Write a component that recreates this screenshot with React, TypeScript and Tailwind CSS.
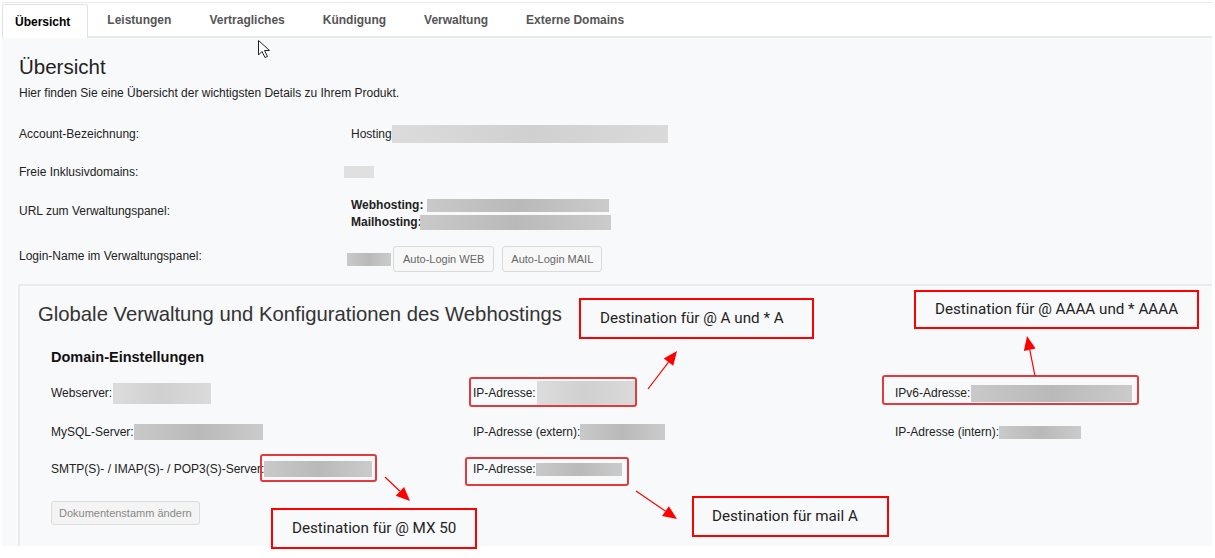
import React from "react";

type Pt = [number, number];

function Arrow({ from, to }: { from: Pt; to: Pt }) {
  const dx = to[0] - from[0];
  const dy = to[1] - from[1];
  const len = Math.hypot(dx, dy);
  const ux = dx / len;
  const uy = dy / len;
  const hl = 14;
  const hw = 6;
  const bx = to[0] - ux * hl;
  const by = to[1] - uy * hl;
  const px = -uy;
  const py = ux;
  const pts = `${to[0]},${to[1]} ${bx + px * hw},${by + py * hw} ${bx - px * hw},${by - py * hw}`;
  return (
    <g>
      <line x1={from[0]} y1={from[1]} x2={bx} y2={by} stroke="#f00" strokeWidth={1.2} />
      <polygon points={pts} fill="#f00" />
    </g>
  );
}

function Blur({ w, h, tone = "mid", className = "" }: { w: string; h: string; tone?: "mid" | "light"; className?: string }) {
  const t =
    tone === "light"
      ? "bg-gradient-to-r from-[#dcdcdc] via-[#d0d0d0] to-[#dadada]"
      : "bg-gradient-to-r from-[#c9c9c9] via-[#b9b9b9] to-[#cbcbcb]";
  return <span className={`inline-block ${w} ${h} ${t} ${className}`} />;
}

const tabs = ["Leistungen", "Vertragliches", "Kündigung", "Verwaltung", "Externe Domains"];

export default function App() {
  return (
    <div className="relative w-[1215px] h-[558px] bg-white overflow-hidden font-['Liberation_Sans',Arial,sans-serif] text-[#222]">
      <div className="ml-[2px] w-[1210px] pt-[2px]">
        <div className="border-t border-[#e9e9e9]">
          {/* Tab bar */}
          <div className="flex h-[35px] border-b-2 border-[#e7e9ec] text-[12px] font-bold">
            <div className="relative z-10 mt-[1px] mb-[-2px] flex items-center rounded-t-[3px] border border-b-0 border-[#dfe2e6] bg-white pl-[12px] pr-[17px] pt-[1px] text-black">
              Übersicht
            </div>
            {tabs.map((t) => (
              <div key={t} className="flex items-center px-[19px] pt-[1px] text-[#555]">
                {t}
              </div>
            ))}
          </div>

          {/* Content */}
          <div className="h-[508px] overflow-hidden bg-[#f8f9fa] pl-[17px]">
            <div className="mt-[16px] text-[20.5px] leading-[26px] text-[#222]">Übersicht</div>
            <div className="mt-[5px] text-[12px] leading-[16px]">
              Hier finden Sie eine Übersicht der wichtigsten Details zu Ihrem Produkt.
            </div>

            <div className="mt-[21px] text-[12px] leading-[16px]">
              <div className="flex h-[24px] items-center">
                <div className="w-[332px]">Account-Bezeichnung:</div>
                <div className="flex items-center">
                  Hosting
                  <Blur w="w-[276px]" h="h-[18px]" tone="light" />
                </div>
              </div>

              <div className="mt-[14px] flex h-[24px] items-center">
                <div className="w-[332px]">Freie Inklusivdomains:</div>
                <span className="-ml-[7px] inline-block h-[12px] w-[30px] bg-[#e0e0e0]" />
              </div>

              <div className="mt-[13px] flex h-[34px] items-start">
                <div className="w-[332px] pt-[6px]">URL zum Verwaltungspanel:</div>
                <div className="leading-[17px]">
                  <div className="flex items-center">
                    <span className="font-bold">Webhosting:</span>
                    <Blur w="w-[182px]" h="h-[13px]" className="ml-[4px]" />
                  </div>
                  <div className="flex items-center">
                    <span className="font-bold">Mailhosting:</span>
                    <Blur w="w-[191px]" h="h-[15px]" className="-ml-[2px]" />
                  </div>
                </div>
              </div>

              <div className="mt-[15px] flex h-[26px] items-start">
                <div className="w-[332px] pt-[2px]">Login-Name im Verwaltungspanel:</div>
                <div className="-ml-[4px] flex items-center">
                  <Blur w="w-[44px]" h="h-[13px]" />
                  <button className="ml-[2px] h-[26px] rounded-[3px] border border-[#dadada] bg-[#f8f8f8] px-[9px] text-[11px] text-[#666]">
                    Auto-Login WEB
                  </button>
                  <button className="ml-[8px] h-[26px] rounded-[3px] border border-[#dadada] bg-[#f8f8f8] px-[8px] text-[11px] text-[#666]">
                    Auto-Login MAIL
                  </button>
                </div>
              </div>
            </div>

            {/* Panel */}
            <div className="mt-[12px] -ml-[1px] h-[300px] border-2 border-r-0 border-[#e8ebee] bg-[#f8f9fa] pl-[18px] pt-[16px]">
              <div className="text-[20.3px] leading-[24px] text-[#333]">
                Globale Verwaltung und Konfigurationen des Webhostings
              </div>
              <div className="pl-[13px]">
                <div className="mt-[22px] text-[14.5px] font-bold leading-[18px] text-[#111]">Domain-Einstellungen</div>

                <div className="text-[12px] leading-[16px]">
                  <div className="mt-[15px] grid h-[24px] grid-cols-[422px_422px_1fr] items-center">
                    <div className="flex items-center">
                      Webserver:
                      <Blur w="w-[98px]" h="h-[21px]" tone="light" className="ml-[1px]" />
                    </div>
                    <div className="flex items-center">
                      IP-Adresse:
                      <Blur w="w-[98px]" h="h-[24px]" tone="light" className="ml-[1px]" />
                    </div>
                    <div className="flex items-center">
                      IPv6-Adresse:
                      <Blur w="w-[161px]" h="h-[17px]" className="ml-[1px]" />
                    </div>
                  </div>

                  <div className="mt-[15px] grid h-[24px] grid-cols-[422px_422px_1fr] items-center">
                    <div className="flex items-center">
                      MySQL-Server:
                      <Blur w="w-[129px]" h="h-[16px]" />
                    </div>
                    <div className="flex items-center">
                      IP-Adresse (extern):
                      <Blur w="w-[85px]" h="h-[16px]" />
                    </div>
                    <div className="flex items-center">
                      IP-Adresse (intern):
                      <Blur w="w-[82px]" h="h-[13px]" />
                    </div>
                  </div>

                  <div className="mt-[13px] grid h-[24px] grid-cols-[422px_422px_1fr] items-center">
                    <div className="flex items-center">
                      SMTP(S)- / IMAP(S)- / POP3(S)-Server:
                      <Blur w="w-[108px]" h="h-[16px]" />
                    </div>
                    <div className="flex items-center">
                      IP-Adresse:
                      <Blur w="w-[86px]" h="h-[13px]" />
                    </div>
                    <div />
                  </div>
                </div>

                <button className="mt-[20px] h-[24px] rounded-[3px] border border-[#dcdcdc] bg-[#f4f4f4] px-[7px] text-[11px] text-[#888]">
                  Dokumentenstamm ändern
                </button>
              </div>
            </div>
          </div>
        </div>
      </div>

      {/* Highlight boxes */}
      <div className="absolute left-[469px] top-[377px] h-[30px] w-[168px] rounded-[3px] border-2 border-[#e23b3f]" />
      <div className="absolute left-[882px] top-[375px] h-[30px] w-[257px] rounded-[3px] border-2 border-[#e23b3f]" />
      <div className="absolute left-[260px] top-[454px] h-[28px] w-[117px] rounded-[3px] border-2 border-[#e23b3f]" />
      <div className="absolute left-[465px] top-[457px] h-[29px] w-[164px] rounded-[3px] border-2 border-[#e23b3f]" />

      {/* Annotation boxes */}
      <div className="absolute left-[579px] top-[298px] flex h-[41px] w-[235px] items-center border-2 border-[#f00] pl-[19px] font-['Roboto',sans-serif] text-[15.2px] text-[#222]">
        Destination für @ A und * A
      </div>
      <div className="absolute left-[914px] top-[290px] flex h-[39px] w-[285px] items-center border-2 border-[#f00] pl-[19px] font-['Roboto',sans-serif] text-[15.2px] text-[#222]">
        Destination für @ AAAA und * AAAA
      </div>
      <div className="absolute left-[271px] top-[508px] flex h-[41px] w-[206px] items-center border-2 border-[#f00] pl-[19px] font-['Roboto',sans-serif] text-[15.2px] text-[#222]">
        Destination für @ MX 50
      </div>
      <div className="absolute left-[692px] top-[496px] flex h-[41px] w-[197px] items-center border-2 border-[#f00] pl-[18px] font-['Roboto',sans-serif] text-[15.2px] text-[#222]">
        Destination für mail A
      </div>

      {/* Arrows + cursor */}
      <svg className="pointer-events-none absolute left-0 top-0" width={1215} height={558}>
        <Arrow from={[648, 389]} to={[677, 351]} />
        <Arrow from={[1035, 376]} to={[1027, 336]} />
        <Arrow from={[385, 477]} to={[410, 501]} />
        <Arrow from={[636, 491]} to={[677, 519]} />
        <path
          d="M258.5 40.5 L258.5 55 L262 51.5 L265 57.5 L267.5 56.5 L264.5 50.5 L269.5 50.5 Z"
          fill="#fff"
          stroke="#222"
          strokeWidth={1}
          strokeLinejoin="round"
        />
      </svg>
    </div>
  );
}
